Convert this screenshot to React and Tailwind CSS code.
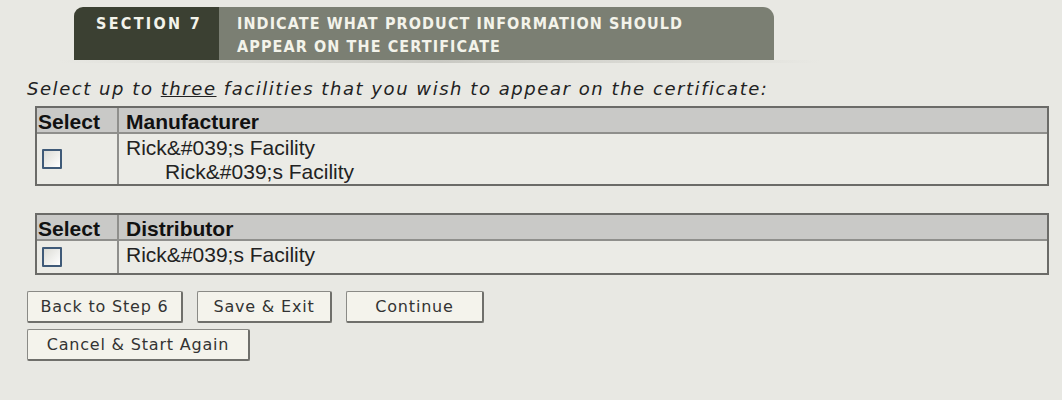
export default function App() {
  const btn =
    "h-[32px] border border-[#8a8a86] border-r-2 border-b-2 border-r-[#6f6f6b] border-b-[#6f6f6b] bg-[#f4f3ec] rounded-[2px] text-[16px] tracking-[0.8px] text-[#333] font-['DejaVu_Sans',sans-serif]";

  return (
    <div className="w-[1062px] h-[400px] bg-[#e8e8e3] overflow-hidden font-['Liberation_Sans',Arial,sans-serif]">
      {/* section banner */}
      <div className="pt-[7px] pl-[74px]">
        <div className="flex w-[700px] h-[53px]">
          <div className="w-[145px] bg-[#3b4032] rounded-tl-[9px] pl-[22px] pt-[5px] text-[16px] leading-[23px] font-bold tracking-[2.3px] text-[#f3f3ea] font-['DejaVu_Sans_Condensed','DejaVu_Sans',sans-serif]">
            SECTION 7
          </div>
          <div className="flex-1 bg-[#7b7f73] rounded-tr-[11px] pl-[18px] pt-[5px] text-[16px] leading-[23px] font-bold tracking-[1.1px] text-[#f3f3ea] font-['DejaVu_Sans_Condensed','DejaVu_Sans',sans-serif]">
            INDICATE WHAT PRODUCT INFORMATION SHOULD
            <br />
            APPEAR ON THE CERTIFICATE
          </div>
        </div>
      </div>
      <div className="ml-[60px] w-[760px] h-[3px] bg-gradient-to-r from-[#e8e8e3] via-[#c9c9c3] to-[#e8e8e3]" />

      <p className="mt-[14px] ml-[27px] text-[18px] leading-[24px] tracking-[1.55px] italic text-[#222] font-['DejaVu_Sans',sans-serif]">
        Select up to <span className="underline">three</span> facilities that you wish to appear on the certificate:
      </p>

      <FacilityTable
        className="mt-[5px]"
        title="Manufacturer"
        lines={["Rick&#039;s Facility", "Rick&#039;s Facility"]}
        rowH="h-[50px]"
      />
      <FacilityTable
        className="mt-[27px]"
        title="Distributor"
        lines={["Rick&#039;s Facility"]}
        rowH="h-[32px]"
      />

      <div className="ml-[27px] mt-[16px] flex gap-[14px]">
        <button type="button" className={`${btn} w-[156px]`}>Back to Step 6</button>
        <button type="button" className={`${btn} w-[135px]`}>Save &amp; Exit</button>
        <button type="button" className={`${btn} w-[138px]`}>Continue</button>
      </div>
      <div className="ml-[27px] mt-[6px]">
        <button type="button" className={`${btn} w-[223px]`}>Cancel &amp; Start Again</button>
      </div>
    </div>
  );
}

function FacilityTable({ className, title, lines, rowH }) {
  return (
    <div className={`ml-[35px] w-[1014px] border-2 border-[#6b6b68] ${className}`}>
      <div className="flex h-[26px] bg-[#c9c9c7] border-b-2 border-[#8f8f8c] text-[21px] font-bold text-[#111] leading-[25px]">
        <div className="w-[82px] pl-[1px] pt-[1px] border-r-2 border-[#8f8f8c]">Select</div>
        <div className="flex-1 pl-[7px] pt-[1px]">{title}</div>
      </div>
      <div className={`flex ${rowH} bg-[#ebebe6] text-[21px] text-[#222] leading-[24px]`}>
        <div className="w-[82px] border-r-2 border-[#8f8f8c] flex items-center pl-[5px]">
          <span className="block w-[20px] h-[20px] border-2 border-[#3f5a78] bg-gradient-to-br from-[#dcdcd6] to-white rounded-[1px]" />
        </div>
        <div className="flex-1 pl-[7px] pt-[2px]">
          {lines.map((l, i) => (
            <div key={i} className={i > 0 ? "pl-[39px]" : ""}>
              {l}
            </div>
          ))}
        </div>
      </div>
    </div>
  );
}
